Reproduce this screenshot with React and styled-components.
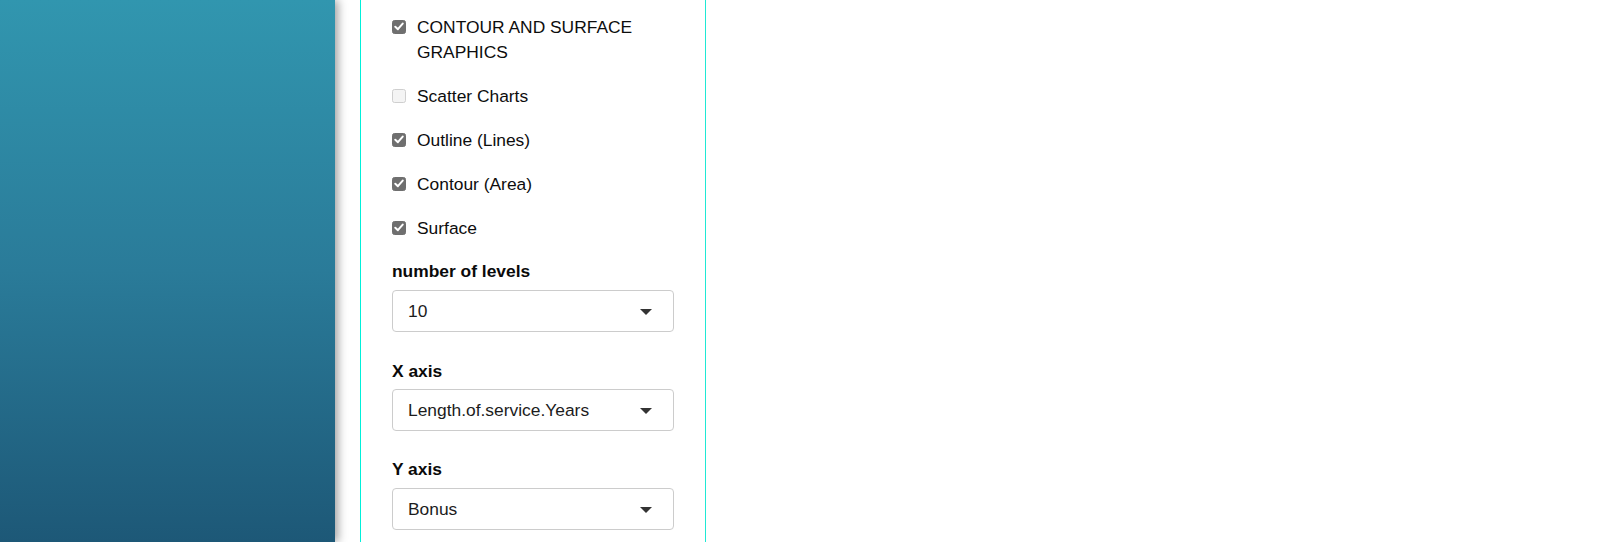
import React from "react";
import styled, { createGlobalStyle } from "styled-components";

const Global = createGlobalStyle`
  html, body { margin: 0; padding: 0; background: #fff; }
  body {
    font-family: "Liberation Sans", Arial, sans-serif;
    overflow: hidden;
  }
`;

const Page = styled.div`
  display: flex;
  align-items: stretch;
  height: 542px;
  overflow: hidden;
`;

const Sidebar = styled.aside`
  width: 335px;
  flex: none;
  background: linear-gradient(to bottom, #3196af 0%, #2a7b99 50%, #1d5877 100%);
  box-shadow: 3px 0 9px rgba(0, 0, 0, 0.38);
  position: relative;
  z-index: 1;
`;

const Panel = styled.section`
  margin-left: 25px;
  width: 346px;
  flex: none;
  border-left: 1px solid #00f0da;
  border-right: 1px solid #20e8d4;
  padding: 14.5px 0 0 31px;
  box-sizing: border-box;
  display: flex;
  flex-direction: column;
`;

const CheckList = styled.div`
  display: flex;
  flex-direction: column;
  gap: 19px;
`;

const CheckRow = styled.label`
  display: flex;
  align-items: flex-start;
  gap: 11px;
  font-size: 17.4px;
  line-height: 25px;
  color: #0d0d0d;
  width: 250px;
`;

const Box = styled.span`
  flex: none;
  width: 14px;
  height: 14px;
  margin-top: 5px;
  border-radius: 2.5px;
  box-sizing: border-box;
  background: ${(p) => (p.$checked ? "#6f6f6f" : "#f4f4f4")};
  border: 1px solid ${(p) => (p.$checked ? "#6f6f6f" : "#cfcfcf")};
  display: flex;
  align-items: center;
  justify-content: center;
`;

const Label = styled.div`
  font-size: 17.4px;
  font-weight: bold;
  line-height: 24px;
  color: #0a0a0a;
  margin-top: ${(p) => p.$mt}px;
`;

const Select = styled.div`
  margin-top: ${(p) => p.$mt}px;
  width: 282px;
  height: 42px;
  box-sizing: border-box;
  border: 1px solid #cccccc;
  border-radius: 4px;
  background: #fff;
  display: flex;
  align-items: center;
  justify-content: space-between;
  padding: 0 21px 0 15px;
  font-size: 17.4px;
  color: #1c1c1c;
`;

const Caret = styled.span`
  width: 0;
  height: 0;
  border-left: 6px solid transparent;
  border-right: 6px solid transparent;
  border-top: 6px solid #333;
  margin-top: 1px;
`;

function Check({ checked, children }) {
  return (
    <CheckRow>
      <Box $checked={checked}>
        {checked && (
          <svg width="10" height="9" viewBox="0 0 10 9">
            <path d="M1.3 4.8 L3.9 7.2 L8.7 1.6" fill="none" stroke="#fff" strokeWidth="2" strokeLinecap="round" strokeLinejoin="round" />
          </svg>
        )}
      </Box>
      <span>{children}</span>
    </CheckRow>
  );
}

function Dropdown({ value, mt }) {
  return (
    <Select $mt={mt}>
      <span>{value}</span>
      <Caret />
    </Select>
  );
}

export default function App() {
  return (
    <>
      <Global />
      <Page>
        <Sidebar />
        <Panel>
          <CheckList>
            <Check checked>CONTOUR AND SURFACE GRAPHICS</Check>
            <Check checked={false}>Scatter Charts</Check>
            <Check checked>Outline (Lines)</Check>
            <Check checked>Contour (Area)</Check>
            <Check checked>Surface</Check>
          </CheckList>
          <Label $mt={18.5}>number of levels</Label>
          <Dropdown value="10" mt={7} />
          <Label $mt={26.5}>X axis</Label>
          <Dropdown value="Length.of.service.Years" mt={6.5} />
          <Label $mt={26}>Y axis</Label>
          <Dropdown value="Bonus" mt={7} />
        </Panel>
      </Page>
    </>
  );
}
